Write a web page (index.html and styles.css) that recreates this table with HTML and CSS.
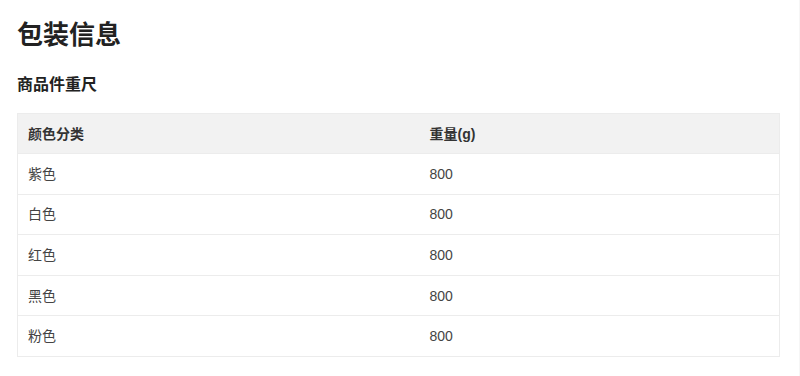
FILE: index.html
```html
<!DOCTYPE html>
<html lang="zh-CN">
<head>
<meta charset="utf-8">
<title>包装信息</title>
<link rel="stylesheet" href="styles.css">
</head>
<body>
<div class="page">
  <h1 class="title">包装信息</h1>
  <h2 class="subtitle">商品件重尺</h2>
  <table class="spec">
    <colgroup><col class="c1"><col class="c2"></colgroup>
    <thead>
      <tr><th>颜色分类</th><th>重量(g)</th></tr>
    </thead>
    <tbody>
      <tr><td>紫色</td><td>800</td></tr>
      <tr><td>白色</td><td>800</td></tr>
      <tr><td>红色</td><td>800</td></tr>
      <tr><td>黑色</td><td>800</td></tr>
      <tr><td>粉色</td><td>800</td></tr>
    </tbody>
  </table>
</div>
</body>
</html>
```
FILE: styles.css
```css
html, body {
  margin: 0;
  padding: 0;
  background: #fff;
}
body {
  font-family: "Liberation Sans", "Noto Sans CJK SC", sans-serif;
  color: #333;
}
.page {
  box-sizing: border-box;
  width: 800px;
  min-height: 376px;
  padding: 17px 20px 0 17px;
  border-right: 1px solid #f6f6f6;
}
.title {
  margin: 0;
  font-size: 26px;
  line-height: 36px;
  font-weight: 600;
  color: #222;
}
.subtitle {
  margin: 21px 0 0;
  font-size: 16px;
  line-height: 22px;
  font-weight: 700;
  color: #222;
}
.spec {
  margin-top: 17px;
  width: 763px;
  border-collapse: collapse;
  table-layout: fixed;
  border: 1px solid #ececec;
  font-size: 14px;
}
.c1 { width: 402px; }
.spec th, .spec td {
  text-align: left;
  padding: 0 10px;
  line-height: 20px;
}
.spec th {
  background: #f2f2f2;
  font-weight: 700;
  color: #333;
  height: 39px;
}
.spec td {
  height: 39.6px;
  border-top: 1px solid #ececec;
  color: #444;
}
```
